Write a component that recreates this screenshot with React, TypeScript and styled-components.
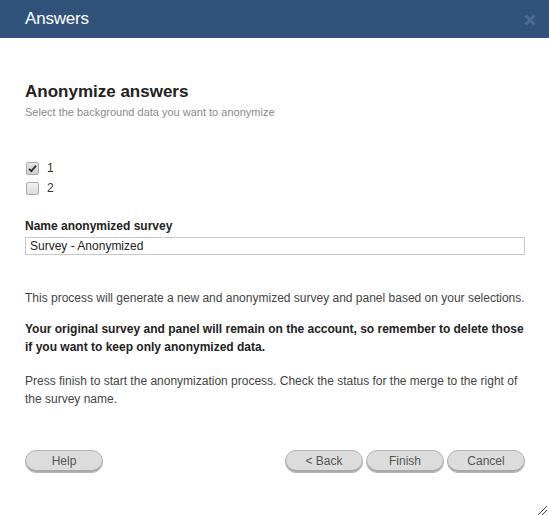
import React from "react";
import styled, { createGlobalStyle } from "styled-components";

const GlobalStyle = createGlobalStyle`
  html, body {
    margin: 0;
    padding: 0;
    background: #fff;
  }
  body {
    font-family: "Liberation Sans", Arial, sans-serif;
  }
`;

interface checkItem {
  label: string;
  checked: boolean;
}

const items: checkItem[] = [
  { label: "1", checked: true },
  { label: "2", checked: false },
];

const App: React.FC = () => {
  return (
    <Dialog>
      <GlobalStyle />
      <Header>
        <Title>Answers</Title>
        <Close aria-label="close">
          <svg width="12" height="12" viewBox="0 0 12 12">
            <path d="M1.5 1.5 L10.5 10.5 M10.5 1.5 L1.5 10.5" stroke="#4f6a90" strokeWidth="2.6" strokeLinecap="butt" />
          </svg>
        </Close>
      </Header>
      <Body>
        <Heading>Anonymize answers</Heading>
        <Sub>Select the background data you want to anonymize</Sub>
        <CheckList>
          {items.map((it) => (
            <CheckRow key={it.label}>
              <Box checked={it.checked}>
                {it.checked && (
                  <svg width="9" height="9" viewBox="0 0 9 9">
                    <path d="M1 4.8 L3.4 7.2 L8 1.6" stroke="#333" strokeWidth="1.9" fill="none" />
                  </svg>
                )}
              </Box>
              <span>{it.label}</span>
            </CheckRow>
          ))}
        </CheckList>
        <FieldLabel>Name anonymized survey</FieldLabel>
        <Input defaultValue="Survey - Anonymized" />
        <Para top={34}>
          This process will generate a new and anonymized survey and panel based on your selections.
        </Para>
        <Para top={13} bold>
          Your original survey and panel will remain on the account, so remember to delete those if you want to keep only anonymized data.
        </Para>
        <Para top={16}>
          Press finish to start the anonymization process. Check the status for the merge to the right of the survey name.
        </Para>
        <Footer>
          <Button>Help</Button>
          <Group>
            <Button>&lt; Back</Button>
            <Button>Finish</Button>
            <Button>Cancel</Button>
          </Group>
        </Footer>
      </Body>
      <Grip>
        <svg width="12" height="12" viewBox="0 0 12 12">
          <path d="M2 11 L11 2 M6 11 L11 6" stroke="#444" strokeWidth="1" />
        </svg>
      </Grip>
    </Dialog>
  );
};

export default App;

const Dialog = styled.div`
  position: relative;
  width: 549px;
  height: 515px;
  background: #fff;
  overflow: hidden;
`;

const Header = styled.div`
  height: 38px;
  background: #31527a;
  display: flex;
  align-items: center;
  justify-content: space-between;
  padding: 0 13px 0 25px;
`;

const Title = styled.h1`
  margin: 0;
  color: #fff;
  font-size: 17px;
  font-weight: 400;
  letter-spacing: -0.2px;
`;

const Close = styled.span`
  display: flex;
  align-items: center;
  margin-top: 2px;
`;

const Body = styled.div`
  padding: 0 24px 0 25px;
`;

const Heading = styled.h2`
  margin: 44px 0 0;
  font-size: 17px;
  line-height: 20px;
  font-weight: 700;
  color: #222;
`;

const Sub = styled.p`
  margin: 3px 0 0;
  font-size: 11px;
  line-height: 14px;
  color: #8a8a8a;
`;

const CheckList = styled.div`
  margin-top: 39px;
  display: flex;
  flex-direction: column;
`;

const CheckRow = styled.label`
  display: flex;
  align-items: center;
  gap: 8px;
  height: 20px;
  font-size: 12px;
  color: #333;
  padding-left: 1px;
`;

const Box = styled.span<{ checked: boolean }>`
  width: 11px;
  height: 11px;
  border: 1px solid #a9a9a9;
  border-radius: 2px;
  background: ${(p) => (p.checked ? "linear-gradient(#e6e6e6, #cfcfcf)" : "linear-gradient(#f2f2f2, #dcdcdc)")};
  display: flex;
  align-items: center;
  justify-content: center;
`;

const FieldLabel = styled.div`
  margin-top: 20px;
  font-size: 12px;
  line-height: 16px;
  font-weight: 700;
  color: #222;
`;

const Input = styled.input`
  display: block;
  box-sizing: border-box;
  margin-top: 3px;
  width: 500px;
  height: 18px;
  border: 1px solid #c8c8c8;
  padding: 0 4px;
  font-family: "Liberation Sans", Arial, sans-serif;
  font-size: 12px;
  color: #222;
  outline: none;
`;

const Para = styled.p<{ top: number; bold?: boolean }>`
  margin: ${(p) => p.top}px 0 0;
  font-size: 12px;
  line-height: 18px;
  color: ${(p) => (p.bold ? "#222" : "#444")};
  font-weight: ${(p) => (p.bold ? 700 : 400)};
`;

const Footer = styled.div`
  margin-top: 42px;
  display: flex;
  justify-content: space-between;
`;

const Group = styled.div`
  display: flex;
  gap: 3px;
`;

const Button = styled.button`
  box-sizing: border-box;
  width: 78px;
  height: 23px;
  border: 1px solid #b4b4b4;
  border-radius: 11px;
  background: #dcdcdc;
  box-shadow: inset 0 -2px 0 #a9a9a9;
  font-family: "Liberation Sans", Arial, sans-serif;
  font-size: 12px;
  color: #555;
  padding: 0 0 2px;
  cursor: pointer;
`;

const Grip = styled.div`
  position: absolute;
  right: 1px;
  bottom: 1px;
  width: 12px;
  height: 12px;
`;
